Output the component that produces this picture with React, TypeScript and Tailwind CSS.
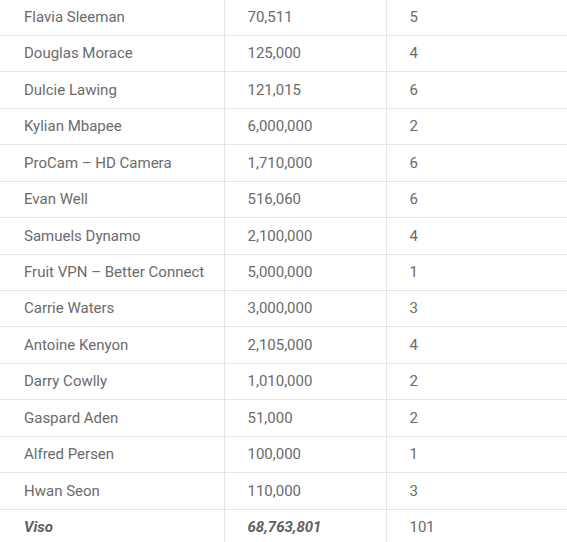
const rows: [string, string, string][] = [
  ["Flavia Sleeman", "70,511", "5"],
  ["Douglas Morace", "125,000", "4"],
  ["Dulcie Lawing", "121,015", "6"],
  ["Kylian Mbapee", "6,000,000", "2"],
  ["ProCam – HD Camera", "1,710,000", "6"],
  ["Evan Well", "516,060", "6"],
  ["Samuels Dynamo", "2,100,000", "4"],
  ["Fruit VPN – Better Connect", "5,000,000", "1"],
  ["Carrie Waters", "3,000,000", "3"],
  ["Antoine Kenyon", "2,105,000", "4"],
  ["Darry Cowlly", "1,010,000", "2"],
  ["Gaspard Aden", "51,000", "2"],
  ["Alfred Persen", "100,000", "1"],
  ["Hwan Seon", "110,000", "3"],
];

export default function App() {
  return (
    <div className="w-[567px] h-[542px] overflow-hidden bg-white font-['Roboto',sans-serif] text-[15px] text-[#6b6b6b]">
      <table className="w-full border-collapse -mt-[1px] table-fixed">
        <colgroup>
          <col className="w-[224px]" />
          <col className="w-[162px]" />
          <col />
        </colgroup>
        <tbody>
          {rows.map(([name, amount, count]) => (
            <tr key={name} className="h-[36.45px] border-b border-[#e6e6e6]">
              <td className="pl-[24px] border-r border-[#e6e6e6]">{name}</td>
              <td className="pl-[23px] border-r border-[#e6e6e6]">{amount}</td>
              <td className="pl-[23px]">{count}</td>
            </tr>
          ))}
          {/* Total row */}
          <tr className="h-[36.45px]">
            <td className="pl-[24px] border-r border-[#e6e6e6] font-bold italic text-[#5f5f5f]">Viso</td>
            <td className="pl-[23px] border-r border-[#e6e6e6] font-bold italic text-[#5f5f5f]">68,763,801</td>
            <td className="pl-[23px]">101</td>
          </tr>
        </tbody>
      </table>
    </div>
  );
}
